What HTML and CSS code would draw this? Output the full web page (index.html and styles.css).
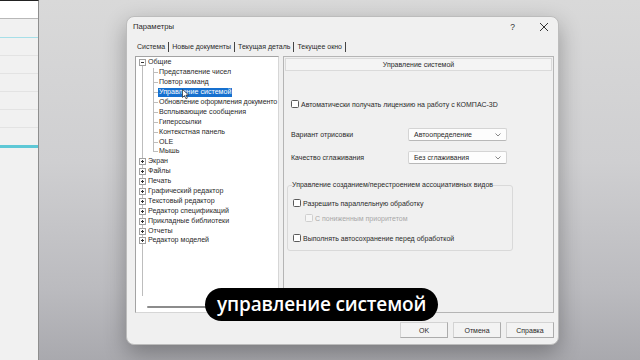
FILE: index.html
```html
<!DOCTYPE html>
<html lang="ru">
<head>
  <meta charset="UTF-8" />
  <title>Параметры</title>
  <link rel="stylesheet" href="styles.css">
</head>
<body>
  <div class="screen">
    <aside class="side">
      <div class="side-top"></div>
      <div class="side-row first cyan"></div>
      <div class="side-row"></div>
      <div class="side-row"></div>
      <div class="side-row"></div>
      <div class="side-row"></div>
      <div class="side-row"></div>
      <div class="side-row bold"></div>
    </aside>

    <main class="desk">
      <div class="dialog">
        <div class="titlebar">
          <span class="title">Параметры</span>
          <span class="help">?</span>
          <svg class="close" width="10" height="10" viewBox="0 0 10 10"><path d="M1 1L9 9M9 1L1 9" stroke="#333" stroke-width="1" fill="none"/></svg>
        </div>

        <div class="tabs">
          <span class="tab">Система</span>
          <span class="tab">Новые документы</span>
          <span class="tab">Текущая деталь</span>
          <span class="tab">Текущее окно</span>
        </div>

        <div class="page">
          <div class="tree">
            <ul class="root">
              <li>
                <div class="row">
                  <svg class="exp" viewBox="0 0 7 7"><rect x=".5" y=".5" width="6" height="6" fill="#fff" stroke="#a0a0a0"/><path d="M2 3.5h3" stroke="#333"/></svg>
                  <span class="lbl">Общие</span>
                </div>
                <ul class="children">
                  <li class="row"><span class="twig"></span><span class="lbl">Представление чисел</span></li>
                  <li class="row"><span class="twig"></span><span class="lbl">Повтор команд</span></li>
                  <li class="row"><span class="twig"></span><span class="lbl selected">Управление системой</span></li>
                  <li class="row"><span class="twig"></span><span class="lbl long">Обновление оформления документо</span></li>
                  <li class="row"><span class="twig"></span><span class="lbl">Всплывающие сообщения</span></li>
                  <li class="row"><span class="twig"></span><span class="lbl">Гиперссылки</span></li>
                  <li class="row"><span class="twig"></span><span class="lbl">Контекстная панель</span></li>
                  <li class="row"><span class="twig"></span><span class="lbl">OLE</span></li>
                  <li class="row"><span class="twig"></span><span class="lbl">Мышь</span></li>
                </ul>
              </li>
              <li class="row"><svg class="exp" viewBox="0 0 7 7"><rect x=".5" y=".5" width="6" height="6" fill="#fff" stroke="#a0a0a0"/><path d="M2 3.5h3M3.5 2v3" stroke="#333"/></svg><span class="lbl">Экран</span></li>
              <li class="row"><svg class="exp" viewBox="0 0 7 7"><rect x=".5" y=".5" width="6" height="6" fill="#fff" stroke="#a0a0a0"/><path d="M2 3.5h3M3.5 2v3" stroke="#333"/></svg><span class="lbl">Файлы</span></li>
              <li class="row"><svg class="exp" viewBox="0 0 7 7"><rect x=".5" y=".5" width="6" height="6" fill="#fff" stroke="#a0a0a0"/><path d="M2 3.5h3M3.5 2v3" stroke="#333"/></svg><span class="lbl">Печать</span></li>
              <li class="row"><svg class="exp" viewBox="0 0 7 7"><rect x=".5" y=".5" width="6" height="6" fill="#fff" stroke="#a0a0a0"/><path d="M2 3.5h3M3.5 2v3" stroke="#333"/></svg><span class="lbl">Графический редактор</span></li>
              <li class="row"><svg class="exp" viewBox="0 0 7 7"><rect x=".5" y=".5" width="6" height="6" fill="#fff" stroke="#a0a0a0"/><path d="M2 3.5h3M3.5 2v3" stroke="#333"/></svg><span class="lbl">Текстовый редактор</span></li>
              <li class="row"><svg class="exp" viewBox="0 0 7 7"><rect x=".5" y=".5" width="6" height="6" fill="#fff" stroke="#a0a0a0"/><path d="M2 3.5h3M3.5 2v3" stroke="#333"/></svg><span class="lbl">Редактор спецификаций</span></li>
              <li class="row"><svg class="exp" viewBox="0 0 7 7"><rect x=".5" y=".5" width="6" height="6" fill="#fff" stroke="#a0a0a0"/><path d="M2 3.5h3M3.5 2v3" stroke="#333"/></svg><span class="lbl">Прикладные библиотеки</span></li>
              <li class="row"><svg class="exp" viewBox="0 0 7 7"><rect x=".5" y=".5" width="6" height="6" fill="#fff" stroke="#a0a0a0"/><path d="M2 3.5h3M3.5 2v3" stroke="#333"/></svg><span class="lbl">Отчеты</span></li>
              <li class="row"><svg class="exp" viewBox="0 0 7 7"><rect x=".5" y=".5" width="6" height="6" fill="#fff" stroke="#a0a0a0"/><path d="M2 3.5h3M3.5 2v3" stroke="#333"/></svg><span class="lbl">Редактор моделей</span></li>
            </ul>
            <div class="hscroll"></div>
          </div>

          <div class="panel">
            <div class="panel-head">Управление системой</div>
            <div class="panel-body">
              <label class="check-row license"><span class="box"></span>Автоматически получать лицензию на работу с КОМПАС-3D</label>

              <div class="field-row draw">
                <span class="field-label">Вариант отрисовки</span>
                <span class="select">Автоопределение<svg class="chev" width="6" height="4" viewBox="0 0 6 4"><path d="M.5 .5L3 3 5.5 .5" stroke="#888" fill="none"/></svg></span>
              </div>
              <div class="field-row smooth">
                <span class="field-label">Качество сглаживания</span>
                <span class="select">Без сглаживания<svg class="chev" width="6" height="4" viewBox="0 0 6 4"><path d="M.5 .5L3 3 5.5 .5" stroke="#888" fill="none"/></svg></span>
              </div>

              <fieldset class="group">
                <legend>Управление созданием/перестроением ассоциативных видов</legend>
                <label class="check-row parallel"><span class="box"></span>Разрешить параллельную обработку</label>
                <label class="check-row low disabled"><span class="box"></span>С пониженным приоритетом</label>
                <label class="check-row autosave"><span class="box"></span>Выполнять автосохранение перед обработкой</label>
              </fieldset>
            </div>
          </div>
        </div>

        <div class="buttons">
          <button>OK</button>
          <button>Отмена</button>
          <button>Справка</button>
        </div>
      </div>

      <svg class="cursor" width="8" height="11" viewBox="0 0 8 11"><path d="M.5 .5V8.5L2.5 6.6 4 9.8 5.4 9.1 3.9 6H6.6Z" fill="#fff" stroke="#222" stroke-width=".7"/></svg>

      <div class="caption">управление системой</div>
    </main>
  </div>
</body>
</html>
```

FILE: styles.css
```css
* {
  box-sizing: border-box;
}

body {
  margin: 0;
  width: 640px;
  height: 360px;
  overflow: hidden;
  font-family: "Liberation Sans", Arial, sans-serif;
  color: #2a2a2a;
}

.screen {
  display: flex;
  height: 360px;
}

/* window on the left edge */
.side {
  flex: none;
  width: 39px;
  background: #f1f1f1;
  border-top: 1px solid #222;
  border-right: 1px solid #8e8e8e;
}

.side-top {
  height: 18px;
  background: #fff;
  border-bottom: 1px solid #b8b8b8;
}

.side-row {
  height: 18px;
  border-bottom: 1px solid #e3e3e3;
}

.side-row.first {
  height: 19px;
}

.side-row.cyan {
  border-bottom-color: #a6dfe8;
}

.side-row.bold {
  height: 20px;
  border-bottom: 3px solid #5ec8d6;
}

/* desktop */
.desk {
  flex: 1;
  position: relative;
  padding: 16px 0 0 87px;
  background: linear-gradient(180deg, #d9d9d9 0%, #cfcfd1 45%, #bbbbbf 80%, #a9a9ae 100%);
}

.dialog {
  width: 433px;
  height: 329px;
  display: flex;
  flex-direction: column;
  background: #f0f0f0;
  border: 1px solid #bcbcbc;
  border-radius: 8px;
  box-shadow: 0 8px 22px rgba(0, 0, 0, 0.3);
}

.titlebar {
  height: 19px;
  display: flex;
  align-items: center;
  padding: 0 9px 0 6px;
  font-size: 7.7px;
}

.title {
  flex: 1;
}

.help {
  font-size: 8.5px;
  color: #333;
  margin-right: 24px;
}

.tabs {
  height: 20px;
  display: flex;
  align-items: flex-start;
  padding: 6px 0 0 7px;
  font-size: 7px;
}

.tab {
  height: 10px;
  line-height: 10px;
  padding: 0 3px;
  border-right: 1px solid #444;
  white-space: nowrap;
}

.page {
  height: 257px;
  display: flex;
  gap: 4px;
  padding: 0 4px 0 8px;
}

/* tree */
.tree {
  width: 144px;
  display: flex;
  flex-direction: column;
  overflow: hidden;
  background: #fff;
  border: 1px solid #a3a3a3;
  border-right-color: #d6d6d6;
  border-bottom-color: #d6d6d6;
  font-size: 7.1px;
  padding-top: 1px;
}

.tree ul {
  list-style: none;
  margin: 0;
  padding: 0;
}

.root {
  flex: 1;
  background: linear-gradient(#bdbdbd, #bdbdbd) no-repeat 6px 5px / 1px calc(100% - 15px);
}

.children {
  background: linear-gradient(#bdbdbd, #bdbdbd) no-repeat 17px 0 / 1px calc(100% - 5px);
}

.row {
  height: 9.9px;
  display: flex;
  align-items: center;
  white-space: nowrap;
}

.exp {
  flex: none;
  width: 7px;
  height: 7px;
  margin-left: 3px;
}

.exp + .lbl {
  margin-left: 1px;
}

.twig {
  flex: none;
  width: 5px;
  margin-left: 17px;
  border-top: 1px solid #bdbdbd;
}

.lbl {
  padding: 0 1px;
  line-height: 9px;
}

.lbl.long {
  padding-right: 0;
  letter-spacing: -0.12px;
}

.lbl.selected {
  background: #1670cf;
  color: #fff;
}

.hscroll {
  width: 78px;
  height: 2px;
  margin: 0 0 4px 11px;
  background: #8c8c8c;
  border-radius: 1px;
}

/* right panel */
.panel {
  flex: 1;
  display: flex;
  flex-direction: column;
  background: #f0f0f0;
  border: 1px solid #b5b5b5;
  font-size: 7px;
}

.panel-head {
  height: 13px;
  margin: 1px 1px 0;
  line-height: 12px;
  text-align: center;
  background: #f4f4f4;
  border: 1px solid #dadada;
}

.panel-body {
  display: flex;
  flex-direction: column;
  padding-left: 7px;
}

.check-row {
  height: 10px;
  display: flex;
  align-items: center;
  gap: 2px;
  white-space: nowrap;
}

.box {
  flex: none;
  width: 8px;
  height: 8px;
  background: #fff;
  border: 1px solid #5a5a5a;
  border-radius: 1.5px;
}

.check-row.disabled {
  color: #a8a8a8;
}

.check-row.disabled .box {
  background: #f6f6f6;
  border-color: #cfcfcf;
}

.license {
  margin-top: 28px;
}

.field-row {
  height: 13px;
  display: flex;
  align-items: center;
}

.draw {
  margin-top: 19px;
}

.smooth {
  margin-top: 10px;
}

.field-label {
  width: 117px;
}

.select {
  width: 99px;
  height: 13px;
  display: flex;
  align-items: center;
  justify-content: space-between;
  padding: 0 5px 0 5px;
  background: #fdfdfd;
  border: 1px solid #d4d4d4;
  border-bottom-color: #b8b8b8;
  border-radius: 2px;
}

.group {
  width: 226px;
  margin: 16px 0 0 -4px;
  padding: 0 0 7px 5px;
  border: 1px solid #d9d9d9;
  border-radius: 3px;
}

.group legend {
  padding: 0;
  margin-left: -1px;
  line-height: 10px;
}

.parallel {
  margin-top: 8px;
}

.low {
  margin-top: 5px;
  padding-left: 12px;
}

.autosave {
  margin-top: 10px;
}

/* dialog buttons */
.buttons {
  display: flex;
  justify-content: flex-end;
  gap: 5px;
  padding: 9px 4px 0 0;
}

.buttons button {
  width: 48px;
  height: 16px;
  padding: 0;
  font-family: inherit;
  font-size: 7px;
  color: #2a2a2a;
  background: #f3f3f3;
  border: 1px solid #d3d3d3;
  border-right-color: #acacac;
  border-bottom-color: #acacac;
}

.cursor {
  position: absolute;
  left: 143px;
  top: 89px;
}

/* subtitle */
.caption {
  position: absolute;
  left: 166px;
  top: 288px;
  height: 33px;
  padding: 0 12px;
  border-radius: 17px;
  background: #000;
  color: #fff;
  font-family: "Open Sans", "Noto Sans", sans-serif;
  font-weight: 600;
  font-size: 19px;
  letter-spacing: -0.15px;
  line-height: 32px;
  white-space: nowrap;
}
```
